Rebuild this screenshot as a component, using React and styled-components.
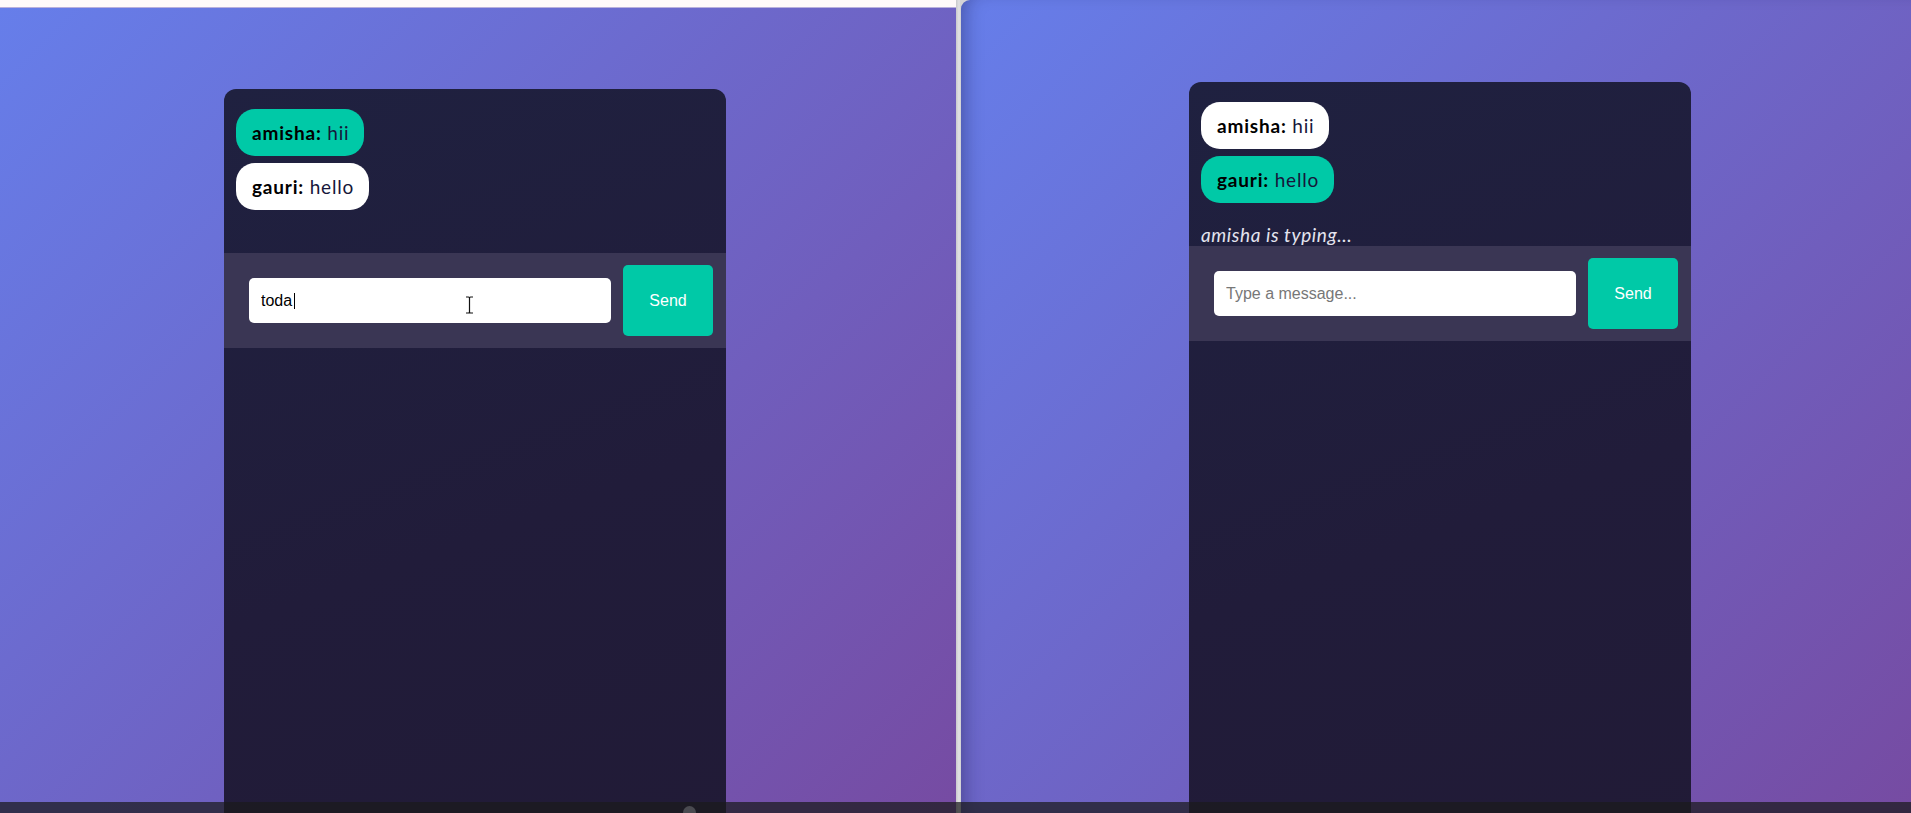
import React from "react";
import styled, { createGlobalStyle } from "styled-components";

const Global = createGlobalStyle`
  html, body { margin: 0; padding: 0; overflow: hidden; background: #1e1e2a; }
  * { box-sizing: border-box; }
`;

const Screen = styled.div`
  position: relative;
  display: flex;
  width: 1911px;
  height: 813px;
  overflow: hidden;
  background: #d4d4d6;
`;

const LeftWindow = styled.div`
  width: 956px;
  display: flex;
  flex-direction: column;
`;

const TopStrip = styled.div`
  height: 8px;
  background: #fffafa;
  border-bottom: 1px solid #b9b0dc;
`;

const Viewport = styled.div`
  flex: 1;
  overflow: hidden;
  background: linear-gradient(135deg, #667eea 0%, #764ba2 100%);
  padding: ${(p) => p.$top}px 0 0 ${(p) => p.$left}px;
  ${(p) =>
    p.$rounded &&
    `border-top-left-radius: 9px; box-shadow: inset 14px 0 18px -10px rgba(20,20,60,0.35);`}
`;

const Divider = styled.div`
  width: 5px;
  background: linear-gradient(90deg, #c9c9cc, #e2e2e4 60%, #cfcfd2);
`;

const RightWindow = styled.div`
  flex: 1;
  display: flex;
  flex-direction: column;
`;

const Card = styled.div`
  width: 502px;
  height: 900px;
  border-radius: 12px;
  overflow: hidden;
  background: linear-gradient(160deg, #1f2140 0%, #211c3a 50%, #211a35 100%);
  display: flex;
  flex-direction: column;
`;

const Messages = styled.div`
  height: 164px;
  padding: 20px 12px 0;
  display: flex;
  flex-direction: column;
  align-items: flex-start;
  gap: 7px;
`;

const Bubble = styled.div`
  padding: 11px 15px 11px 16px;
  line-height: 25px;
  border-radius: 19px;
  font-family: "Segoe UI", Lato, "Noto Sans", sans-serif;
  font-size: 19px;
  letter-spacing: 0.8px;
  color: #16163a;
  background: ${(p) => (p.$mine ? "#00c9a7" : "#ffffff")};
  white-space: nowrap;
  strong { color: #000; font-weight: 700; }
`;

const Typing = styled.div`
  margin-top: auto;
  margin-bottom: -1px;
  font-family: "Segoe UI", Lato, "Noto Sans", sans-serif;
  font-style: italic;
  font-size: 19px;
  letter-spacing: 0.6px;
  line-height: 24px;
  color: #e4e4ee;
`;

const Form = styled.form`
  position: relative;
  height: 95px;
  background: #3a3654;
  display: flex;
  align-items: center;
  gap: 12px;
  padding: 0 13px 0 25px;
`;

const Input = styled.input`
  flex: 1;
  min-width: 0;
  height: 45px;
  border: none;
  outline: none;
  border-radius: 5px;
  padding: 0 12px;
  background: #fff;
  font-family: "Liberation Sans", Arial, sans-serif;
  font-size: 16px;
  color: #000;
  &::placeholder { color: #777; }
`;

const SendButton = styled.button`
  width: 90px;
  height: 71px;
  border: none;
  border-radius: 5px;
  background: #00c9a7;
  color: #fff;
  font-family: "Liberation Sans", Arial, sans-serif;
  font-size: 16px;
  cursor: pointer;
`;

const TextCaret = styled.span`
  position: absolute;
  left: 70px;
  top: 40px;
  width: 1px;
  height: 16px;
  background: #000;
  pointer-events: none;
`;

const IBeam = styled.svg`
  position: absolute;
  left: 241px;
  top: 43px;
  pointer-events: none;
`;

const BottomBar = styled.div`
  position: absolute;
  left: 0;
  right: 0;
  bottom: 0;
  height: 11px;
  background: rgba(26, 26, 28, 0.72);
`;

const Dome = styled.div`
  position: absolute;
  left: 683px;
  bottom: -6px;
  width: 13px;
  height: 13px;
  border-radius: 50%;
  background: #4a4a50;
`;

function ChatCard({ messages, mineName, typing, value, placeholder, cursor }) {
  return (
    <Card>
      <Messages>
        {messages.map((m, i) => (
          <Bubble key={i} $mine={m.user === mineName}>
            <strong>{m.user}:</strong> {m.text}
          </Bubble>
        ))}
        {typing && <Typing>{typing}</Typing>}
      </Messages>
      <Form onSubmit={(e) => e.preventDefault()}>
        <Input defaultValue={value} placeholder={placeholder} />
        <SendButton type="submit">Send</SendButton>
        {cursor && (
          <>
            <TextCaret />
            <IBeam width="9" height="18" viewBox="0 0 9 18">
              <path
                d="M1 1h2.5c.6 0 1 .4 1 1v14c0 .6-.4 1-1 1H1M8 1H5.5c-.6 0-1 .4-1 1v14c0 .6.4 1 1 1H8"
                fill="none"
                stroke="#111"
                strokeWidth="1.2"
              />
            </IBeam>
          </>
        )}
      </Form>
    </Card>
  );
}

const msgs = [
  { user: "amisha", text: "hii" },
  { user: "gauri", text: "hello" },
];

export default function App() {
  return (
    <>
      <Global />
      <Screen>
        <LeftWindow>
          <TopStrip />
          <Viewport $top={81} $left={224}>
            <ChatCard messages={msgs} mineName="amisha" value="toda" placeholder="Type a message..." cursor />
          </Viewport>
        </LeftWindow>
        <Divider />
        <RightWindow>
          <Viewport $top={82} $left={228} $rounded>
            <ChatCard
              messages={msgs}
              mineName="gauri"
              typing="amisha is typing..."
              value=""
              placeholder="Type a message..."
            />
          </Viewport>
        </RightWindow>
        <BottomBar>
          <Dome />
        </BottomBar>
      </Screen>
    </>
  );
}
